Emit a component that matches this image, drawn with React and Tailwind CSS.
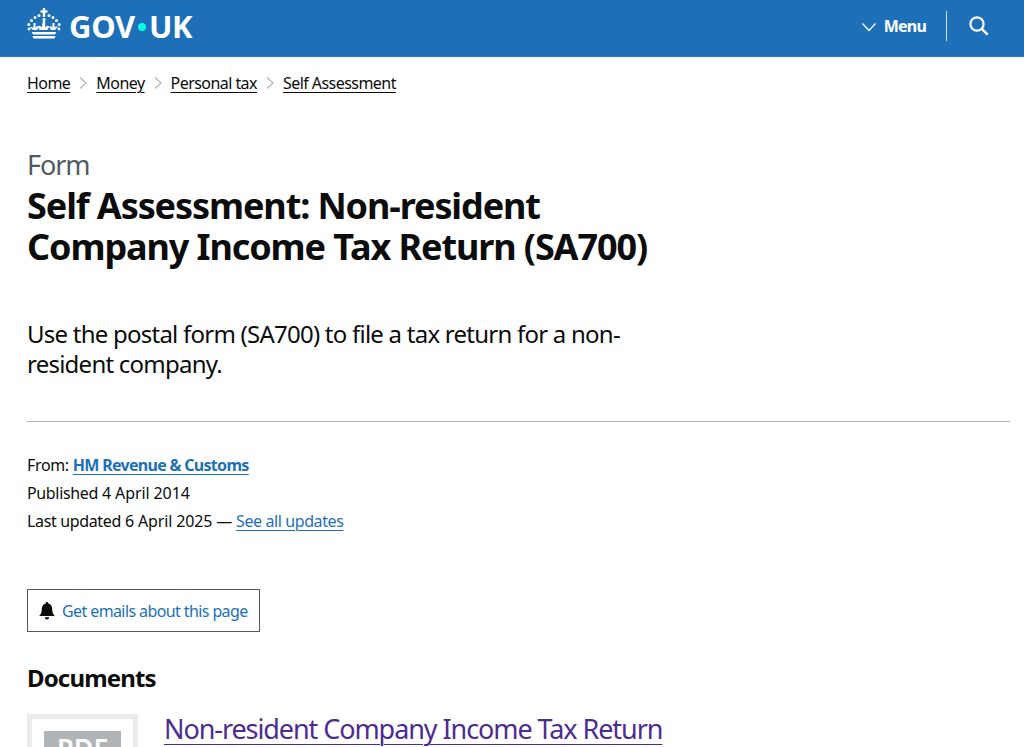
import React from 'react';

const Crown = () => (
  <svg width="34" height="31" viewBox="0 0 34 31" fill="white" className="-mt-[5px]">
    <rect x="15.8" y="0" width="2.4" height="9" />
    <rect x="13.5" y="2.4" width="7" height="2.2" />
    <circle cx="12" cy="7.5" r="1.5" />
    <circle cx="22" cy="7.5" r="1.5" />
    <circle cx="8" cy="9.5" r="1.5" />
    <circle cx="26" cy="9.5" r="1.5" />
    <circle cx="4.5" cy="12.5" r="1.5" />
    <circle cx="29.5" cy="12.5" r="1.5" />
    <circle cx="1.8" cy="16.5" r="1.5" />
    <circle cx="32.2" cy="16.5" r="1.5" />
    <circle cx="2" cy="21" r="1.4" />
    <circle cx="32" cy="21" r="1.4" />
    <circle cx="17" cy="11.5" r="1.6" />
    <path d="M15.8 13h2.4v6.5c1-2 3-2.2 4.4-1.2l-2.2 3.6h-7.8l-2.2-3.6c1.4-1 3.4-.8 4.4 1.2z" />
    <path d="M6.5 15h2v4.5c.8-1.2 2.2-1.4 3.2-.8l-1.6 3.2H6.2L3 19.4c1-.8 2.6-.6 3.5.6z" />
    <path d="M25.5 15h2v4.5c.9-1.2 2.5-1.4 3.5-.6l-3.2 3H23.9l-1.6-3.2c1-.6 2.4-.4 3.2.8z" />
    <path d="M4.5 24h25l-1.6 2.4H6.1z" />
    <path d="M5.5 28h23l-1 2.6H6.5z" />
  </svg>
);

const Chevron = () => (
  <svg width="8" height="14" viewBox="0 0 8 14" fill="none" stroke="#b1b4b6" strokeWidth="1.2" className="mx-[9px]">
    <path d="M1 1.5 7 7l-6 5.5" />
  </svg>
);

const crumbs = ['Home', 'Money', 'Personal tax', 'Self Assessment'];

const Header = () => (
  <header className="h-[57px] bg-[#1d70b8] border-b border-[#2a78bc] flex items-center justify-between pl-[27px] pr-[35px] pb-[4px]">
    <a className="flex items-center gap-[8px] text-white">
      <Crown />
      <span className="text-[31px] font-bold tracking-[-0.3px] leading-none flex items-center">
        GOV<span className="w-[8px] h-[8px] rounded-full bg-[#00ffe0] mx-[3px] mt-[1px]"></span>UK
      </span>
    </a>
    <div className="flex items-center text-white">
      <svg width="16" height="10" viewBox="0 0 16 10" fill="none" stroke="white" strokeWidth="1.3" className="mr-[7px] mt-[2px]">
        <path d="M1.5 1.5 8 8.5l6.5-7" />
      </svg>
      <span className="text-[16px] font-bold tracking-[-0.8px]">Menu</span>
      <span className="w-px h-[30px] bg-[#d2e2f1] ml-[20px] mr-[22px]"></span>
      <svg width="20" height="20" viewBox="0 0 20 20" fill="none" stroke="white" strokeWidth="2.2">
        <circle cx="8" cy="8" r="6.6" />
        <path d="m12.6 12.6 6 6" strokeWidth="2.6" />
      </svg>
    </div>
  </header>
);

const App = () => {
  return (
    <div className="h-[747px] overflow-hidden bg-white text-[#0b0c0c] font-['Noto_Sans',sans-serif]">
      <Header />
      <main className="pl-[27px] pr-[14px]">
        <nav className="flex items-center h-[20px] mt-[16px] text-[16px] leading-[20px] tracking-[-0.55px]">
          {crumbs.map((c, i) => (
            <React.Fragment key={c}>
              {i > 0 && <Chevron />}
              <a className="underline underline-offset-[3px] decoration-1">{c}</a>
            </React.Fragment>
          ))}
        </nav>

        <p className="mt-[57px] text-[27px] leading-[30px] tracking-[-1.1px] text-[#505a5f]">Form</p>
        <h1 className="mt-[5px] w-[630px] text-[36px] leading-[41px] font-bold tracking-[-1.1px]">
          Self Assessment: Non-resident Company Income Tax Return (SA700)
        </h1>

        <p className="mt-[52px] w-[620px] text-[24px] leading-[30px] tracking-[-0.76px]">
          Use the postal form (SA700) to file a tax return for a non-resident company.
        </p>

        <hr className="mt-[42px] border-t border-[#b1b4b6]" />

        <dl className="mt-[29px] text-[16px] leading-[28px] tracking-[-0.35px]">
          <div className="flex">
            <dt className="mr-[4px]">From:</dt>
            <dd>
              <a className="font-bold tracking-[-0.7px] text-[#1d70b8] underline underline-offset-[3px] decoration-1">HM Revenue &amp; Customs</a>
            </dd>
          </div>
          <div className="flex">
            <dt className="mr-[4px]">Published</dt>
            <dd className="tracking-[-0.1px]">4 April 2014</dd>
          </div>
          <div className="flex">
            <dt className="mr-[4px]">Last updated</dt>
            <dd className="tracking-[-0.15px]">
              6 April 2025 — <a className="tracking-[-0.4px] text-[#1d70b8] underline underline-offset-[3px] decoration-1">See all updates</a>
            </dd>
          </div>
        </dl>

        <a className="mt-[54px] flex items-center w-[233px] h-[43px] border border-[#505a5f] pl-[11px] text-[16px] tracking-[-0.6px] text-[#1d70b8]">
          <svg width="16" height="18" viewBox="0 0 16 18" fill="#0b0c0c" className="mr-[7px]">
            <path d="M8 0a1.3 1.3 0 0 1 1.3 1.5C12 2.2 13.2 4.4 13.2 7c0 3.6 1 5.3 2.6 7H.2c1.6-1.7 2.6-3.4 2.6-7 0-2.6 1.2-4.8 3.9-5.5A1.3 1.3 0 0 1 8 0z" />
            <path d="M5.8 15.2h4.4A2.2 2.2 0 0 1 8 17.4a2.2 2.2 0 0 1-2.2-2.2z" />
          </svg>
          Get emails about this page
        </a>

        <h2 className="mt-[31px] text-[24px] leading-[30px] font-bold tracking-[-0.85px]">Documents</h2>

        <div className="mt-[21px] flex">
          <div className="w-[111px] h-[157px] shrink-0 border-[5px] border-[#ebebeb] bg-white pt-[12px] px-[12px]">
            <div className="h-[40px] bg-[#b1b4b6] text-white text-[27px] leading-[33px] font-semibold text-center">PDF</div>
          </div>
          <a className="ml-[26px] text-[27px] leading-[30px] text-[#4c2c92] underline underline-offset-[5px] decoration-1 tracking-[-1.08px]">
            Non-resident Company Income Tax Return
          </a>
        </div>
      </main>
    </div>
  );
};

export default App;
